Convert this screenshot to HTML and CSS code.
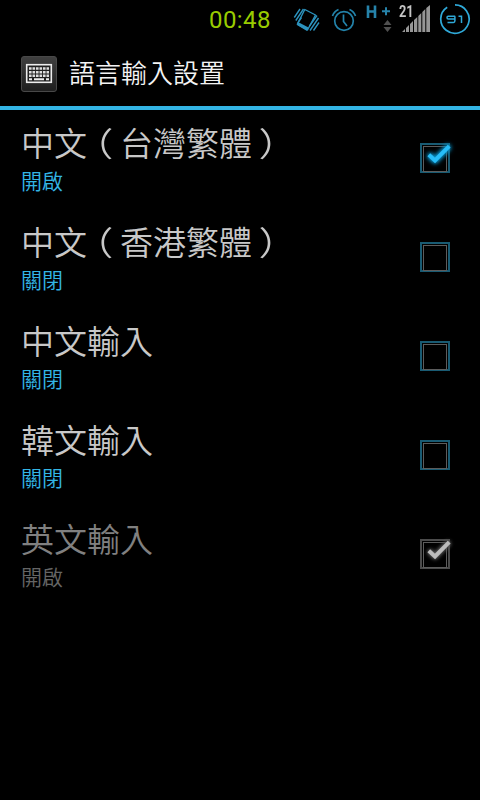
FILE: index.html
```html
<!DOCTYPE html>
<html lang="zh-Hant">
<head>
<meta charset="utf-8">
<title>語言輸入設置</title>
<link rel="stylesheet" href="styles.css">
</head>
<body>
<div class="status">
  <span class="clock">00:48</span>
  <svg class="vibrate" width="28" height="38" viewBox="292 0 28 38">
    <g fill="none" stroke="#2c92bd" stroke-width="1.4">
      <path d="M294.3 17.5L300 9M295.8 20.5L303.5 9M297.8 22.8L301.5 17.5M310 30.5L318.5 18M313.5 30.5L319 22.5M309.5 26L317 15.5"/>
      <path d="M304.8 9.5L315.5 15L307.5 30L297.3 24.2Z" stroke-linejoin="round"/>
    </g>
    <path d="M298 22L308.5 27.5L307 31L297 25Z" fill="#2c92bd"/>
  </svg>
  <svg class="alarm" width="26" height="38" viewBox="331 0 26 38" fill="none" stroke="#2383aa" stroke-width="1.7">
    <circle cx="344" cy="21" r="9.3"/>
    <path d="M343.5 14.5V21.5L347 26M332.5 16Q334 11.5 338.5 9.5M349.5 9.5Q354 11.5 355.5 16" />
  </svg>
  <svg class="data" width="28" height="38" viewBox="365 0 28 38">
    <path d="M368 5.5V18M375 5.5V18M368 11.5H375" fill="none" stroke="#2683aa" stroke-width="2.6"/>
    <path d="M382 11.3H390M386 7.3V15.3" fill="none" stroke="#2683aa" stroke-width="2"/>
    <path d="M383.5 25L387.5 20L391.5 25ZM383.5 27L387.5 32L391.5 27Z" fill="#505050"/>
  </svg>
  <div class="signal">
    <svg width="32" height="38" viewBox="399 0 32 38" fill="#969696">
      <path d="M402 32L405 29V32ZM406 28L409 25V32H406ZM410 24L413 21V32H410ZM414 20L417.3 17V32H414ZM418.3 16L421.3 13V32H418.3ZM422.3 12L425.3 9V32H422.3ZM426.3 8L430 5V32H426.3Z"/>
    </svg>
    <span class="level">21</span>
  </div>
  <div class="battery">
    <svg width="32" height="38" viewBox="439 0 32 38" fill="none" stroke="#2fa9d8" stroke-width="1.7">
      <path d="M455 4.9A14.2 14.2 0 1 1 447.2 7.2"/>
      <path d="M455.2 16.2H448.2Q447 16.2 447 17.5Q447 19 448.2 19H455M454.9 16.2V20.8Q454.9 22.4 453.5 22.4H447.5M458.5 16.2H461.5V23.1" stroke-width="1.5"/>
    </svg>
  </div>
</div>
<header class="bar">
  <svg class="app" width="38" height="38" viewBox="0 0 38 38">
    <defs><linearGradient id="key" x2="0" y2="1"><stop stop-color="#404040"/><stop offset="1" stop-color="#1e1e1e"/></linearGradient></defs>
    <rect x="1.5" y="1.5" width="35" height="35" rx="2.5" fill="url(#key)" stroke="#484848"/>
    <rect x="6.7" y="9.7" width="24.6" height="17.6" fill="#202020" stroke="#ededed" stroke-width="1.6"/>
    <path d="M9 13.5H29M9 17.2H29M9 20.7H29" stroke="#dedede" stroke-width="2.4" stroke-dasharray="2.6 .9"/>
    <path d="M9 24.2H12M14 24.2H24M26 24.2H29" stroke="#ededed" stroke-width="2"/>
  </svg>
  <h1>語言輸入設置</h1>
</header>
<main>
  <div class="row">
    <div><div class="name">中文<span class="paren">（</span>台灣繁體<span class="paren">）</span></div><div class="state">開啟</div></div>
    <span class="box"><svg class="tick" width="40" height="40" viewBox="0 0 40 40"><path d="M13.8 17.8L20 23.5L34.2 9.2"/></svg></span>
  </div>
  <div class="row">
    <div><div class="name">中文<span class="paren">（</span>香港繁體<span class="paren">）</span></div><div class="state">關閉</div></div>
    <span class="box"></span>
  </div>
  <div class="row">
    <div><div class="name">中文輸入</div><div class="state">關閉</div></div>
    <span class="box"></span>
  </div>
  <div class="row">
    <div><div class="name">韓文輸入</div><div class="state">關閉</div></div>
    <span class="box"></span>
  </div>
  <div class="row disabled">
    <div><div class="name">英文輸入</div><div class="state">開啟</div></div>
    <span class="box"><svg class="tick" width="40" height="40" viewBox="0 0 40 40"><path d="M13.8 17.8L20 23.5L34.2 9.2"/></svg></span>
  </div>
</main>
</body>
</html>
```
FILE: styles.css
```css
* { box-sizing: border-box; }
body {
  margin: 0;
  height: 800px;
  overflow: hidden;
  background: #000;
  font-family: Roboto, "Noto Sans CJK TC", sans-serif;
}
svg { display: block; }
.status { display: flex; height: 38px; padding-left: 209px; }
.clock { width: 83px; font-size: 24px; line-height: 40px; color: #99cc00; letter-spacing: .4px; }
.alarm { margin-left: 11px; }
.data { margin-left: 8px; }
.signal { position: relative; margin-left: 6px; }
.level {
  position: absolute;
  left: 0;
  top: 3px;
  font: bold 16px/18px "Roboto", sans-serif;
  color: #c4c4c4;
  transform: scaleX(.8);
  transform-origin: left;
}
.battery { margin-left: 8px; }
.bar {
  display: flex;
  align-items: center;
  height: 72px;
  padding-left: 20px;
  border-bottom: 4px solid #33b5e5;
}
.app { margin-top: 4px; }
h1 {
  margin: 0 0 0 11px;
  font-family: "Noto Sans CJK TC", sans-serif;
  font-size: 26px;
  line-height: 38px;
  font-weight: 350;
  color: #f3f3f3;
}
main { margin-top: -2px; }
.row {
  display: flex;
  align-items: center;
  justify-content: space-between;
  height: 99px;
  padding: 0 30px 0 21px;
  font-family: "Noto Sans CJK TC", sans-serif;
}
.name { padding-top: 2px; font-size: 33px; line-height: 40px; font-weight: 350; color: #c8c8c8; }
.state { padding-top: 3px; font-size: 21px; line-height: 30px; font-weight: 350; color: #33b5e5; }
.paren {
  display: inline-block;
  width: 33px;
  text-align: center;
  font-feature-settings: "halt";
  transform: scaleX(1.2);
}
.box {
  position: relative;
  width: 30px;
  height: 30px;
  padding: 1px;
  border: 2px solid #195b73;
}
.box::before { content: ""; display: block; height: 24px; border: 1px solid #5c5c5c; }
.tick { position: absolute; left: -7px; top: -8px; overflow: visible; }
.tick path { fill: none; stroke: #27bdf8; stroke-width: 4; }
.tick { filter: drop-shadow(0 0 2px #08a8e8) drop-shadow(0 0 2px #087aa8); }
.disabled .name { color: #808080; }
.disabled .state { color: #656565; }
.disabled .box { border-color: #4b4b4b; }
.disabled .tick path { stroke: #bcbcbc; }
.disabled .tick { filter: drop-shadow(0 0 2px #666) drop-shadow(0 0 1px #444); }
```
